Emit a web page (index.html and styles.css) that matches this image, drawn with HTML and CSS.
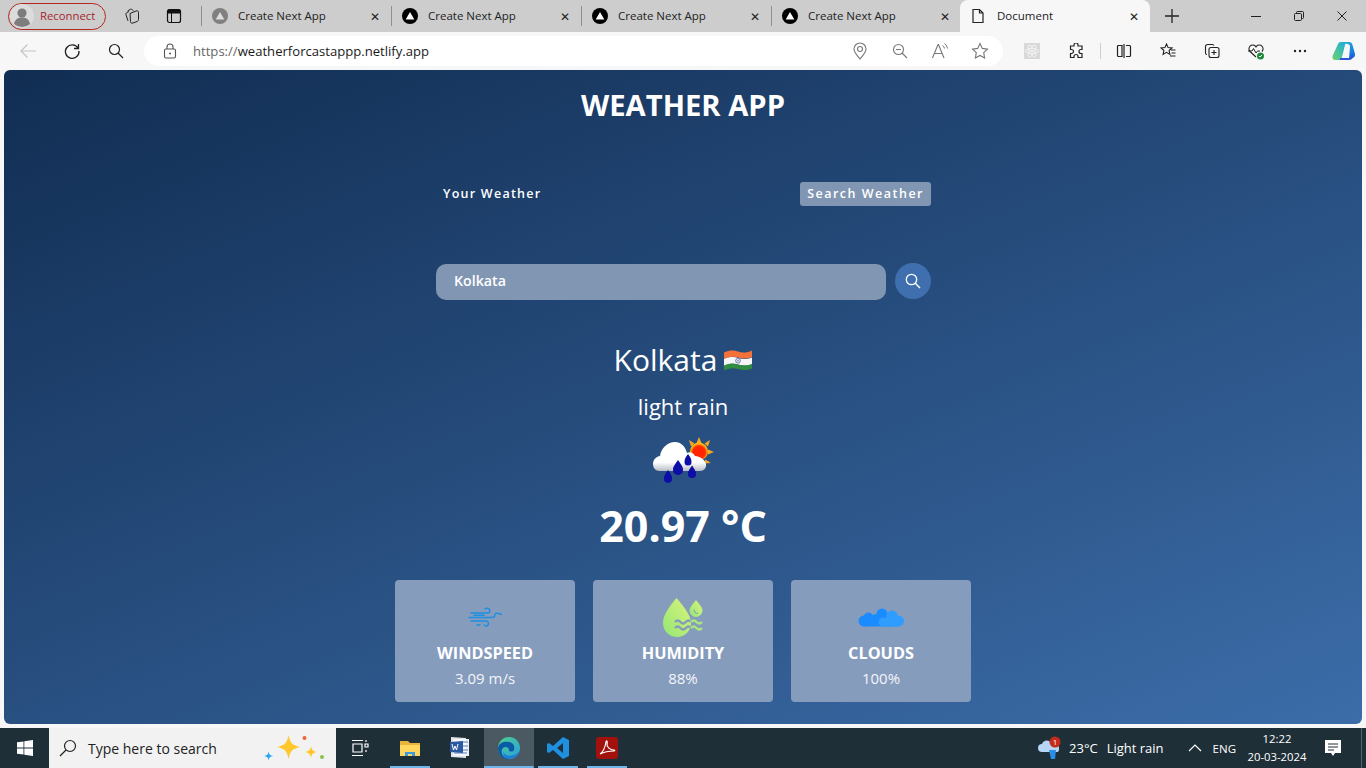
FILE: index.html
```html
<!DOCTYPE html>
<html lang="en">
<head>
<meta charset="utf-8">
<title>Document</title>
<link rel="stylesheet" href="styles.css">
</head>
<body>
<div class="screen">
  <header class="tabstrip">
    <div class="profile">
      <svg class="avatar" viewBox="0 0 24 24"><circle cx="12" cy="12" r="12" fill="#dcdcdc"/><circle cx="12" cy="9" r="4.6" fill="#7d7d7d"/><path d="M4 20c1-5 4-6.500 8-6.500s7 1.500 8 6.500a12 12 0 0 1-16 0z" fill="#7d7d7d"/></svg>
      <span>Reconnect</span>
    </div>
    <span class="strip-btn first"><svg viewBox="0 0 16 16" class="i16"><g fill="none" stroke="#222" stroke-width="1"><path d="M6 5.500l6-2.500c1.500-.5 2.500 0 2.500 1.500v7c0 1-.5 1.500-1.500 2l-4 1.500c-1.500.5-2.500 0-2.500-1.500z"/><path d="M5 3.500L3 4.500c-1 .5-1.300 1.300-1 2.300l2 6"/><path d="M9.500 2.800l-1.200-1c-.8-.8-1.500-.8-2.300-.3L3.500 3"/></g></svg></span>
    <span class="strip-btn"><svg viewBox="0 0 16 16" class="i16"><rect x="1.500" y="1.500" width="13" height="13" rx="2" fill="none" stroke="#111" stroke-width="1.200"/><path d="M2 2h12v3H2zM5.500 5v9" fill="#111" stroke="#111"/></svg></span>
    <span class="tab-sep"></span>
    <div class="tab">
      <svg class="fav" viewBox="0 0 16 16"><circle cx="8" cy="8" r="8" fill="#808080"/><path d="M8 4l4.300 7.500H3.700z" fill="#dcdcdc"/></svg>
      <span class="tab-title">Create Next App</span><span class="tab-x">✕</span>
    </div>
    <span class="tab-sep"></span>
    <div class="tab">
      <svg class="fav" viewBox="0 0 16 16"><circle cx="8" cy="8" r="8" fill="#000"/><path d="M8 4l4.300 7.500H3.700z" fill="#fff"/></svg>
      <span class="tab-title">Create Next App</span><span class="tab-x">✕</span>
    </div>
    <span class="tab-sep"></span>
    <div class="tab">
      <svg class="fav" viewBox="0 0 16 16"><circle cx="8" cy="8" r="8" fill="#000"/><path d="M8 4l4.300 7.500H3.700z" fill="#fff"/></svg>
      <span class="tab-title">Create Next App</span><span class="tab-x">✕</span>
    </div>
    <span class="tab-sep"></span>
    <div class="tab">
      <svg class="fav" viewBox="0 0 16 16"><circle cx="8" cy="8" r="8" fill="#000"/><path d="M8 4l4.300 7.500H3.700z" fill="#fff"/></svg>
      <span class="tab-title">Create Next App</span><span class="tab-x">✕</span>
    </div>
    <div class="tab active">
      <svg class="fav" viewBox="0 0 16 16"><path d="M3 1.500h6.500L13 5v9.500H3zM9.500 1.500V5H13" fill="none" stroke="#222" stroke-width="1.200"/></svg>
      <span class="tab-title">Document</span><span class="tab-x">✕</span>
    </div>
    <span class="plus"><svg viewBox="0 0 16 16" class="i16"><path d="M8 1v14M1 8h14" stroke="#222" stroke-width="1.300"/></svg></span>
    <div class="win-controls">
      <svg viewBox="0 0 10 10" class="i10"><path d="M0 5.500h10" stroke="#222"/></svg>
      <svg viewBox="0 0 10 10" class="i10"><rect x=".5" y="2.500" width="7" height="7" rx="1" fill="none" stroke="#222"/><path d="M2.500 2.500V1.500a1 1 0 0 1 1-1h5a1 1 0 0 1 1 1v5a1 1 0 0 1-1 1h-1" fill="none" stroke="#222"/></svg>
      <svg viewBox="0 0 10 10" class="i10"><path d="M.5.500l9 9M9.500.500l-9 9" stroke="#222"/></svg>
    </div>
  </header>

  <nav class="toolbar">
    <span class="tool back"><svg viewBox="0 0 18 18" class="i18"><path d="M17 9H2M8.500 2.500L2 9l6.500 6.500" fill="none" stroke="#c4c4c4" stroke-width="1.200"/></svg></span>
    <span class="tool"><svg viewBox="0 0 18 18" class="i18"><path d="M15.500 2v4.500h-4.500M15 6a6.800 6.800 0 1 0 1 3" fill="none" stroke="#222" stroke-width="1.300"/></svg></span>
    <span class="tool"><svg viewBox="0 0 16 16" class="i16"><circle cx="6.500" cy="6.500" r="5" fill="none" stroke="#222" stroke-width="1.200"/><path d="M10 10l5 5" stroke="#222" stroke-width="1.300"/></svg></span>
    <div class="address">
      <svg viewBox="0 0 14 16" class="lock"><rect x="1.500" y="6" width="11" height="9" rx="1.500" fill="none" stroke="#555" stroke-width="1.100"/><path d="M4 6V4a3 3 0 0 1 6 0v2" fill="none" stroke="#555" stroke-width="1.100"/><circle cx="7" cy="10.500" r="1" fill="#555"/></svg>
      <span class="url"><span class="url-scheme">https://</span>weatherforcastappp.netlify.app</span>
      <div class="addr-icons">
        <svg viewBox="0 0 16 18" class="i18"><path d="M8 17C5 13 2 10.500 2 7a6 6 0 0 1 12 0c0 3.500-3 6-6 10z" fill="none" stroke="#777" stroke-width="1.100"/><circle cx="8" cy="7" r="2.500" fill="none" stroke="#777" stroke-width="1.100"/></svg>
        <svg viewBox="0 0 16 16" class="i16"><circle cx="6.500" cy="6.500" r="5" fill="none" stroke="#777" stroke-width="1.100"/><path d="M4 6.500h5M10 10l5 5" stroke="#777" stroke-width="1.100"/></svg>
        <svg viewBox="0 0 18 18" class="i18"><path d="M1.500 16L7 2.500h.5L13 16M3.500 11.500h8" fill="none" stroke="#777" stroke-width="1.100"/><path d="M11.500 3.500a4 4 0 0 1 2 3M13.500 1.500a7 7 0 0 1 3 5" fill="none" stroke="#777"/></svg>
        <svg viewBox="0 0 18 18" class="i18"><path d="M9 1.500l2.300 4.900 5.200.7-3.800 3.600.9 5.300L9 13.500 4.400 16l.9-5.300L1.500 7.100l5.200-.7z" fill="none" stroke="#777" stroke-width="1.100"/></svg>
      </div>
    </div>
    <div class="ext-icons">
      <span class="tool react"><svg viewBox="0 0 16 16" class="i16"><rect width="16" height="16" fill="#d9d9d9"/><g fill="none" stroke="#f5f5f5" stroke-width=".8"><ellipse cx="8" cy="8" rx="6.500" ry="2.600"/><ellipse cx="8" cy="8" rx="6.500" ry="2.600" transform="rotate(60 8 8)"/><ellipse cx="8" cy="8" rx="6.500" ry="2.600" transform="rotate(120 8 8)"/></g><circle cx="8" cy="8" r="1.200" fill="#f5f5f5"/></svg></span>
      <span class="tool"><svg viewBox="0 0 16 16" class="i16"><path d="M6 2a2 2 0 0 1 4 0v1h4v3.500h-1a2 2 0 0 0 0 4h1V14.500h-4v-1a2 2 0 0 0-4 0v1H2.500V10.500h1a2 2 0 0 0 0-4h-1V3H6z" fill="none" stroke="#222" stroke-width="1.200"/></svg></span>
      <span class="tool-sep"></span>
      <span class="tool"><svg viewBox="0 0 16 16" class="i16"><path d="M6 2.500H2.500a1 1 0 0 0-1 1v9a1 1 0 0 0 1 1H6zM10 2.500h3.500a1 1 0 0 1 1 1v9a1 1 0 0 1-1 1H10M8 1v14" fill="none" stroke="#222" stroke-width="1.200"/></svg></span>
      <span class="tool"><svg viewBox="0 0 16 16" class="i16"><path d="M6.500 1l1.600 3.600 3.900.4-2.900 2.500.8 3.900-3.400-2-3.400 2 .8-3.900L1 5l3.900-.4zM11 7h4.500M11.500 10h4M10 13h5.500" fill="none" stroke="#222" stroke-width="1.100"/></svg></span>
      <span class="tool"><svg viewBox="0 0 16 16" class="i16"><path d="M3 11.500A1.500 1.500 0 0 1 1.500 10V3.500a2 2 0 0 1 2-2h5a2 2 0 0 1 1.500 1" fill="none" stroke="#222" stroke-width="1.100"/><rect x="5" y="4.500" width="10" height="10" rx="2" fill="none" stroke="#222" stroke-width="1.100"/><path d="M10 7v5M7.500 9.500h5" stroke="#222" stroke-width="1.100"/></svg></span>
      <span class="tool"><svg viewBox="0 0 18 18" class="i18"><path d="M9 15L3 9.500a3.800 3.800 0 0 1 5.500-5.300L9 5l.5-.8A3.800 3.800 0 0 1 15 9.500" fill="none" stroke="#222" stroke-width="1.100"/><path d="M1 9h4l1.500-2.500L9 11l1.500-2H13" fill="none" stroke="#222" stroke-width="1"/><circle cx="13.500" cy="14" r="3.500" fill="#1f8a3c"/><path d="M12 14l1 1 2-2" stroke="#fff" fill="none"/></svg></span>
      <span class="tool dots"><svg viewBox="0 0 14 4" class="dots-svg"><circle cx="2" cy="2" r="1.200" fill="#222"/><circle cx="7" cy="2" r="1.200" fill="#222"/><circle cx="12" cy="2" r="1.200" fill="#222"/></svg></span>
      <span class="tool"><svg viewBox="0 0 24 24" class="copilot"><defs><linearGradient id="cpa" x1="0" y1="0" x2="1" y2="1"><stop offset="0" stop-color="#1fc4d8"/><stop offset="1" stop-color="#1a5fe0"/></linearGradient><linearGradient id="cpb" x1="0" y1="1" x2="1" y2="0"><stop offset="0" stop-color="#6fd36b"/><stop offset="1" stop-color="#17a8e6"/></linearGradient></defs><path d="M8 3h9c2 0 3 1 3.500 3L23 15c.5 2-1 4-3 4h-3L18 8c.2-2-1-3-2.500-3z" fill="url(#cpa)"/><path d="M6 5C7 3 8 3 10 3h6c-1.500 0-2.500 1-3 3l-3 12c-.5 2-2 3-4 3H3c-2 0-3-2-2.500-4z" fill="url(#cpb)"/><path d="M8 19h9c2 0 2-2 3-5l1 4c-.5 2-2 3-4 3H6c2 0 2-1 2-2z" fill="#2d55d8"/></svg></span>
    </div>
  </nav>

  <main class="page">
    <h1 class="app-title">WEATHER APP</h1>
    <div class="switcher">
      <span class="switch-tab">Your Weather</span>
      <span class="switch-tab current">Search Weather</span>
    </div>
    <form class="search">
      <div class="search-field">Kolkata</div>
      <span class="search-btn"><svg viewBox="0 0 16 16" class="i16"><circle cx="6.500" cy="6.500" r="5.200" fill="none" stroke="#fff" stroke-width="1.300"/><path d="M10.300 10.300L15 15" stroke="#fff" stroke-width="1.400"/></svg></span>
    </form>
    <section class="report">
      <div class="city">
        <span>Kolkata</span>
        <svg class="flag" viewBox="0 0 28 21">
          <path d="M0 2.500C6 0 10 0 14 1.500S23 3 28 .5V7C23 9 19 9 14 7.500S6 6.500 0 9z" fill="#f4713a"/>
          <path d="M0 9C6 6.500 10 6.500 14 8s9 1.500 14-.5V14c-5 2-9 2-14 .5S6 13.500 0 16z" fill="#f6f6f6"/>
          <path d="M0 15.500c6-2.500 10-2.500 14-1s9 1.500 14-.5V18.500c-5 2-9 2-14 .5S6 18 0 20.500z" fill="#2f8c41"/>
          <circle cx="14" cy="10.800" r="2.300" fill="none" stroke="#45559f" stroke-width=".8"/>
          <circle cx="14" cy="10.800" r=".7" fill="#45559f"/>
        </svg>
      </div>
      <p class="desc">light rain</p>
      <svg class="weather-icon" viewBox="0 0 62 46">
        <defs>
          <radialGradient id="sun" cx=".5" cy=".55" r=".5"><stop offset="0" stop-color="#ff1e00"/><stop offset=".7" stop-color="#ff2a00"/><stop offset=".88" stop-color="#ff9000"/><stop offset="1" stop-color="#ffc21f"/></radialGradient>
          <linearGradient id="cloudfill" x1="0" y1="0" x2="0" y2="1"><stop offset="0" stop-color="#fff"/><stop offset=".7" stop-color="#fff"/><stop offset="1" stop-color="#b9bdc6"/></linearGradient>
          <filter id="soft" x="-20%" y="-20%" width="140%" height="140%"><feGaussianBlur stdDeviation=".7"/></filter>
          <filter id="soft2" x="-20%" y="-20%" width="140%" height="140%"><feGaussianBlur stdDeviation=".35"/></filter>
        </defs>
        <g fill="#f7a823"><path d="M47 0l2.500 6h-5zM62 15l-6-2.500v5zM37 3l5.500 3.500-3.500 3zM58 3l-5.500 3.500 3.500 3zM59 26l-5.500-3.500-1.500 4z"/></g>
        <circle cx="47" cy="14.500" r="9" fill="url(#sun)"/>
        <g filter="url(#soft)" fill="url(#cloudfill)">
          <path d="M8 34c-5 0-7-3.500-7-7 0-4 3-7.500 7-8 1-8 8-14 15-14 6 0 10 4 12 11 3-1.500 6-.5 8 3 5 0 10 4 11 8 .5 4-2 7-6 7z"/>
        </g>
        <g fill="#0808a8" filter="url(#soft2)">
          <path d="M26 23c3 4.500 5 6.500 5 10a5 5 0 0 1-10 0c0-3.500 2-5.500 5-10z"/>
          <path d="M36 17c2 3 3.500 4.500 3.500 8a3.500 3.500 0 0 1-7 0c0-3.500 1.500-5 3.500-8z"/>
          <path d="M40 28.500c2.500 3.500 4 5.500 4 8.500a4 4 0 0 1-8 0c0-3 1.500-5 4-8.500z"/>
          <path d="M16 33c2.500 3.500 4 5.500 4 8.700a4 4 0 0 1-8 0c0-3.200 1.500-5.200 4-8.700z"/>
        </g>
      </svg>
      <p class="temp">20.97 °C</p>
    </section>
    <section class="cards">
      <article class="card">
        <svg class="wind-icon" viewBox="0 0 34 20"><g fill="none" stroke-width="1.500" stroke-linecap="round" stroke="#1f8fe0"><path d="M3 6H19c3 0 3.500-2 2.500-3.500S18 .8 17 2"/><path d="M1 10.500H24c2 0 3-1.500 3-3s3-1.500 5-.5"/><path d="M3 14h15c2.500 0 3 2.500 2 4s-3 1-3.500 0"/><path d="M6 8.200h10M9 18h3"/></g><circle cx="33" cy="7.200" r="1" fill="#1f8fe0"/></svg>
        <h2>WINDSPEED</h2>
        <p>3.09 m/s</p>
      </article>
      <article class="card">
        <svg class="humid-icon" viewBox="0 0 40 40">
          <defs><linearGradient id="drop" x1="0" y1="1" x2="1" y2="0"><stop offset="0" stop-color="#93e676"/><stop offset="1" stop-color="#dcf47a"/></linearGradient></defs>
          <path d="M13.500 0C21 9 28 17 28 25a14 14 0 0 1-28 0C0 17 6 9 13.500 0z" fill="url(#drop)"/>
          <path d="M33 2c3 4 6.500 7 6.500 10.500a6.500 6.500 0 0 1-13 0C26.500 9 30 6 33 2z" fill="url(#drop)"/>
          <path d="M35 15.500a4 4 0 0 1-4-4" fill="none" stroke="#8aa0c0" stroke-width="1.200"/>
          <g fill="none" stroke="#869cbd" stroke-width="2.300"><path d="M12 24q2.700-3 5.400 0t5.400 0 5.200 0"/><path d="M12 30q2.700-3 5.400 0t5.400 0 5.200 0"/></g>
          <g fill="none" stroke="#a8ea7a" stroke-width="2.300"><path d="M28 24q2.700-3 5.500 0t5.500 0"/><path d="M28 30q2.700-3 5.500 0t5.500 0"/></g>
        </svg>
        <h2>HUMIDITY</h2>
        <p>88%</p>
      </article>
      <article class="card">
        <svg class="cloud-icon" viewBox="0 0 46 19">
          <g fill="#1a8cff"><circle cx="6" cy="13" r="5.500"/><circle cx="10.500" cy="9.500" r="5"/><circle cx="24" cy="6" r="5.500"/><circle cx="18" cy="11" r="5"/><rect x="6" y="12" width="30" height="6.500"/></g>
          <g fill="#2f9dff"><circle cx="25" cy="14" r="4.500"/><circle cx="34" cy="8.500" r="6"/><circle cx="40.500" cy="13" r="5.500"/><rect x="25" y="12" width="16" height="6.500"/></g>
        </svg>
        <h2>CLOUDS</h2>
        <p>100%</p>
      </article>
    </section>
  </main>

  <footer class="taskbar">
    <span class="start"><svg viewBox="0 0 16 16" class="i16"><path d="M0 2.300l6.500-.9v6.200H0zM7.300 1.300L16 0v7.600H7.300zM0 8.400h6.500v6.200L0 13.700zM7.300 8.400H16V16l-8.700-1.300z" fill="#fff"/></svg></span>
    <div class="task-search">
      <svg viewBox="0 0 18 18" class="i18"><circle cx="11" cy="7" r="5.500" fill="none" stroke="#222" stroke-width="1.200"/><path d="M7 11l-6 6" stroke="#222" stroke-width="1.300"/></svg>
      <span class="task-search-text">Type here to search</span>
      <svg class="sparkles" viewBox="0 0 60 32"><path d="M24.600 3c1.500 8 4 10.500 12 12-8 1.500-10.500 4-12 12-1.500-8-4-10.500-12-12 8-1.500 10.500-4 12-12z" fill="#ffc72c"/><path d="M4.600 19.500c.5 3 1.500 4 4.500 4.500-3 .5-4 1.500-4.500 4.500-.5-3-1.500-4-4.500-4.500 3-.5 4-1.500 4.500-4.500z" fill="#2aa7f0"/><path d="M47 14c.7 4 2 5.300 6 6-4 .7-5.300 2-6 6-.7-4-2-5.300-6-6 4-.7 5.300-2 6-6z" fill="#ffc72c"/><circle cx="40.500" cy="6" r="2" fill="#f0643a"/><circle cx="58" cy="25" r="2" fill="#8bc34a"/></svg>
    </div>
    <span class="task-item task-view"><svg viewBox="0 0 18 18" class="i18"><path d="M1 1.500h11M1 16.500h11M2 5h9v8H2zM14 5h3v3h-3zM15 1v2M15 11v2" fill="none" stroke="#fff" stroke-width="1.200"/></svg></span>
    <span class="task-item running"><svg viewBox="0 0 24 24" class="i24"><path d="M2 5h8l2 2h10v3H2z" fill="#e8b53a"/><path d="M2 9h20v11H2z" fill="#ffd75f"/><path d="M7 16h10v4h-3v-2h-4v2H7z" fill="#3a9be0"/></svg></span>
    <span class="task-item"><svg viewBox="0 0 24 24" class="i24"><path d="M5 3h16v17H5z" fill="#e9eef7"/><path d="M3 1l15 1v20L3 21z" fill="#f5f7fb" opacity=".9"/><path d="M11 6h9M11 10h9M11 14h9M6 17h13" stroke="#5d7fb8"/><path d="M2 6l13-1v12L2 16z" fill="#2c5aa0"/><path d="M4 8l1.500 6 1.500-4 1.500 4L10 8" fill="none" stroke="#fff"/></svg></span>
    <span class="task-item running focus"><svg viewBox="0 0 24 24" class="i24"><defs><linearGradient id="eg" x1="0" y1="0" x2="1" y2="1"><stop offset="0" stop-color="#4fd08a"/><stop offset="1" stop-color="#2a9fe0"/></linearGradient></defs><circle cx="12" cy="12" r="11" fill="url(#eg)"/><path d="M1 12C2 6 8 5 12 6c5 1 6 5 5 8-1 2-5 2-5 0 0-3-4-4-6-2-3 3-1 10 6 11-6 1-11-4-11-11z" fill="#0b5aa8"/><path d="M23 14c-1 5-6 9-11 9-4 0-6-4-6-8 1 4 6 6 11 4 3-1 5-3 6-5z" fill="#1b7dd6"/></svg></span>
    <span class="task-item running"><svg viewBox="0 0 24 24" class="i24"><path d="M17 1l6 3v16l-6 3L7 14l-4 3-2-1V8l2-1 4 3zM17 7l-6 5 6 5z" fill="#1f8fe0"/></svg></span>
    <span class="task-item running"><svg viewBox="0 0 24 24" class="i24"><rect x="1" y="1" width="22" height="22" rx="3" fill="#a3110c"/><path d="M5 18c3-2 5-6 6-12 .3-2 2-1 1 2-.5 3 3 6 7 6 1 0 1 1 0 1-5 0-10 1-14 3z" fill="none" stroke="#fff" stroke-width="1.200"/></svg></span>
    <div class="tray">
      <svg viewBox="0 0 26 24" class="tray-weather"><path d="M5 16a4 4 0 0 1 0-8c1-4 7-5 9-1 4-1 8 1 8 5a4 4 0 0 1-1 4z" fill="#b7d5f4"/><path d="M12 14h7l-1 9h-4z" fill="#2a8ee8"/><circle cx="18" cy="6" r="5.500" fill="#c42b1c"/><text x="18" y="9" class="badge-num">1</text></svg>
      <span class="tray-temp">23°C</span>
      <span class="tray-cond">Light rain</span>
      <svg viewBox="0 0 14 8" class="chevron"><path d="M1 7l6-6 6 6" fill="none" stroke="#fff" stroke-width="1.200"/></svg>
      <span class="lang">ENG</span>
      <div class="clock"><span>12:22</span><span>20-03-2024</span></div>
      <svg viewBox="0 0 18 18" class="notify"><path d="M1 1h16v13H11l-2 3-2-3H1z" fill="#fff"/><path d="M4 5h10M4 8h10M4 11h6" stroke="#1f2f38"/></svg>
      <span class="show-desktop"></span>
    </div>
  </footer>
</div>
</body>
</html>
```
FILE: styles.css
```css
* { box-sizing: border-box; margin: 0; padding: 0; }
html, body { width: 1366px; height: 768px; overflow: hidden; }
body { font-family: "Open Sans", "Noto Sans", sans-serif; background: #f7f7f7; }
svg { display: block; flex: none; }
.i10 { width: 10px; height: 10px; }
.i16 { width: 16px; height: 16px; }
.i18 { width: 18px; height: 18px; }
.i24 { width: 24px; height: 24px; }

.screen { width: 1366px; height: 768px; display: flex; flex-direction: column; }

/* Browser tab strip */
.tabstrip { height: 32px; background: #cdcdcd; display: flex; align-items: center; padding-left: 8px; flex: none; }
.profile { width: 98px; height: 27px; border: 1px solid #b3261e; border-radius: 14px; display: flex; align-items: center; gap: 6px; padding-left: 1px; color: #a4262c; font-size: 11.300px; }
.profile span { padding-bottom: 1px; }
.avatar { width: 24px; height: 24px; }
.strip-btn { width: 42px; display: flex; justify-content: center; }
.strip-btn.first { margin-left: 5px; }
.tab-sep { width: 1px; height: 20px; background: #8f8f8f; flex: none; }
.strip-btn + .tab-sep { margin-left: 6px; }
.tab { width: 189px; height: 32px; display: flex; align-items: center; padding: 0 8px 0 10px; font-size: 11.500px; color: #222; }
.fav { width: 16px; height: 16px; }
.tab-title { margin-left: 10px; flex: 1; white-space: nowrap; padding-bottom: 1px; }
.tab-x { font-size: 12px; width: 16px; text-align: center; color: #222; }
.tab.active { width: 190px; margin-left: -1px; background: #f7f7f7; border-radius: 8px 8px 0 0; padding-left: 10px; }
.tab.active .tab-title { margin-left: 11px; }
.plus { margin-left: 14px; width: 16px; }
.win-controls { margin-left: auto; width: 135px; display: flex; justify-content: space-between; padding: 0 19px 0 20px; }

/* Browser toolbar */
.toolbar { height: 38px; display: flex; align-items: center; flex: none; background: #f7f7f7; }
.tool { width: 44px; display: flex; justify-content: center; flex: none; }
.tool.back { margin-left: 6px; }
.address { width: 861px; height: 30px; margin-left: 6px; background: #fff; border-radius: 15px; display: flex; align-items: center; padding-left: 19px; }
.lock { width: 14px; height: 16px; }
.url { margin-left: 16px; font-size: 13.100px; color: #1a1a1a; }
.url-scheme { color: #666; }
.addr-icons { margin-left: auto; display: grid; grid-auto-flow: column; grid-auto-columns: 40px; justify-items: center; align-items: center; padding-right: 3px; }
.ext-icons { display: flex; align-items: center; margin-left: 7px; }
.tool-sep { width: 1px; height: 16px; background: #cfcfcf; flex: none; margin: 0 1px 0 2px; }
.dots-svg { width: 14px; height: 4px; }
.copilot { width: 24px; height: 24px; }

/* App page */
.page { height: 654px; margin: 0 4px; border-radius: 6px; background: linear-gradient(158deg, #112d52 0%, #3c6da9 100%); flex: none; color: #fff; display: flex; flex-direction: column; align-items: center; }
.app-title { font-size: 29.200px; line-height: 38px; font-weight: 700; margin-top: 16px; }
.switcher { width: 495px; display: flex; justify-content: space-between; margin-top: 58px; align-items: center; margin-left: 1px; }
.switch-tab { font-size: 12.500px; font-weight: 600; letter-spacing: 1.250px; padding: 0 7px; height: 24px; line-height: 24px; border-radius: 3px; }
.switch-tab.current { background: #8196b3; letter-spacing: 1.500px; }
.search { width: 495px; margin-top: 58px; margin-left: 1px; display: flex; justify-content: space-between; align-items: flex-start; height: 36px; }
.search-field { width: 450px; height: 36px; background: #8096b3; border-radius: 10px; padding-left: 18px; line-height: 34px; font-size: 14.200px; font-weight: 600; }
.search-btn { width: 36px; height: 36px; border-radius: 50%; background: #3f6fae; display: flex; align-items: center; justify-content: center; margin-top: -1px; }
.report { display: flex; flex-direction: column; align-items: center; margin-top: 38px; }
.city { display: flex; align-items: center; gap: 7px; font-size: 30px; line-height: 44px; font-weight: 400; }
.flag { width: 28px; height: 21px; }
.desc { font-size: 22px; line-height: 30px; margin-top: 9px; }
.weather-icon { width: 62px; height: 46px; margin-top: 16px; }
.temp { font-size: 43px; line-height: 56px; font-weight: 700; margin-top: 15px; }
.cards { display: flex; gap: 18px; margin-top: 26px; }
.card { width: 180px; height: 122px; background: #869cbd; border-radius: 4px; display: flex; flex-direction: column; align-items: center; }
.wind-icon { width: 34px; height: 20px; margin: 27px 0 11px; }
.humid-icon { width: 40px; height: 40px; margin-top: 18px; }
.cloud-icon { width: 46px; height: 19px; margin: 28px 0 11px; }
.card h2 { font-size: 16.300px; font-weight: 700; line-height: 24px; margin-top: 3px; }
.card p { font-size: 15px; line-height: 20px; margin-top: 3px; color: #f3f5f9; }

/* Windows taskbar */
.taskbar { height: 40px; margin-top: 4px; background: #1f2f38; display: flex; align-items: center; flex: none; color: #fff; }
.start { width: 49px; display: flex; justify-content: center; }
.task-search { width: 287px; height: 40px; background: #f2f2f2; color: #222; display: flex; align-items: center; padding-left: 10px; font-size: 14px; }
.task-search-text { margin-left: 11px; white-space: nowrap; }
.sparkles { width: 60px; height: 32px; margin-left: auto; margin-right: 12px; }
.task-item { width: 49.250px; height: 40px; display: flex; align-items: center; justify-content: center; flex: none; }
.task-view { width: 49.750px; padding-right: 1px; }
.task-item.running { background: linear-gradient(#6db5ea, #6db5ea) center bottom / 40px 2px no-repeat; }
.task-item.focus { background: linear-gradient(#6db5ea, #6db5ea) center bottom / 100% 2px no-repeat, #4b5a62; }
.tray { margin-left: auto; display: flex; align-items: center; font-size: 13px; }
.tray-weather { width: 26px; height: 24px; }
.badge-num { font-size: 8px; fill: #fff; text-anchor: middle; }
.tray-temp { margin-left: 6px; }
.tray-cond { margin-left: 9px; }
.chevron { width: 14px; height: 8px; margin-left: 24px; }
.lang { margin-left: 11px; font-size: 11.500px; }
.clock { width: 82px; display: flex; flex-direction: column; align-items: center; font-size: 11.300px; line-height: 18px; }
.notify { width: 18px; height: 18px; margin-left: 6px; margin-right: 19px; }
.show-desktop { width: 5px; height: 40px; border-left: 1px solid #55626a; }
```
